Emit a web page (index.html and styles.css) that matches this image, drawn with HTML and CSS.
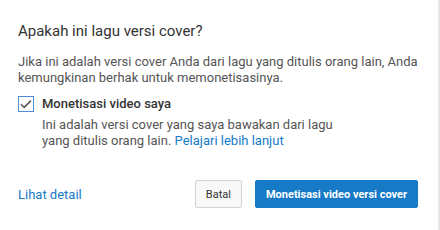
FILE: index.html
```html
<!DOCTYPE html>
<html>
<head>
<meta charset="utf-8">
<link rel="stylesheet" href="styles.css">
</head>
<body>
<div class="dialog">
  <h1 class="title">Apakah ini lagu versi cover?</h1>
  <p class="intro">Jika ini adalah versi cover Anda dari lagu yang ditulis orang lain, Anda kemungkinan berhak untuk memonetisasinya.</p>
  <div class="option">
    <span class="checkbox">
      <svg width="14" height="14" viewBox="0 0 14 14"><path d="M2 7.2 L5.2 10.4 L12 3.6" fill="none" stroke="#555" stroke-width="1.5"/></svg>
    </span>
    <div class="option-text">
      <div class="option-label">Monetisasi video saya</div>
      <div class="option-desc">Ini adalah versi cover yang saya bawakan dari lagu<br>yang ditulis orang lain. <a class="link" href="#">Pelajari lebih lanjut</a></div>
    </div>
  </div>
  <div class="footer">
    <a class="link details" href="#">Lihat detail</a>
    <div class="buttons">
      <button class="btn btn-default">Batal</button>
      <button class="btn btn-primary">Monetisasi video versi cover</button>
    </div>
  </div>
</div>
</body>
</html>
```
FILE: styles.css
```css
html, body {
  margin: 0;
  padding: 0;
  background: #fff;
}
body {
  font-family: Roboto, "Liberation Sans", Arial, sans-serif;
  width: 440px;
  height: 230px;
  overflow: hidden;
}
.dialog {
  box-sizing: border-box;
  width: 440px;
  height: 230px;
  border-right: 2px solid #e6e6e6;
  padding: 21px 20px 0 18px;
}
.title {
  margin: 0;
  font-size: 15px;
  font-weight: 400;
  line-height: 20px;
  color: #333;
}
.intro {
  margin: 13px 0 0;
  font-size: 13px;
  line-height: 16px;
  color: #555;
}
.option {
  display: flex;
  margin-top: 9px;
}
.checkbox {
  box-sizing: border-box;
  width: 16px;
  height: 16px;
  border: 1px solid #4c8fd8;
  display: flex;
  align-items: center;
  justify-content: center;
  margin-top: 1px;
  flex: none;
}
.option-text {
  margin-left: 8px;
}
.option-label {
  font-size: 13px;
  font-weight: 500;
  color: #333;
  line-height: 18px;
}
.option-desc {
  margin-top: 4px;
  font-size: 13px;
  line-height: 16px;
  color: #555;
}
.link {
  color: #167ac6;
  text-decoration: none;
}
.footer {
  display: flex;
  align-items: center;
  justify-content: space-between;
  margin-top: 31px;
}
.details {
  font-size: 13px;
}
.buttons {
  display: flex;
  gap: 13px;
}
.btn {
  font-family: Roboto, "Liberation Sans", Arial, sans-serif;
  height: 28px;
  font-size: 11px;
  border-radius: 2px;
  cursor: pointer;
}
.btn-default {
  background: #f8f8f8;
  border: 1px solid #d3d3d3;
  color: #333;
  font-weight: 400;
  padding: 0 10px;
}
.btn-primary {
  background: #167ac6;
  border: 1px solid #167ac6;
  color: #fff;
  font-weight: 700;
  padding: 0 10px;
}
```
